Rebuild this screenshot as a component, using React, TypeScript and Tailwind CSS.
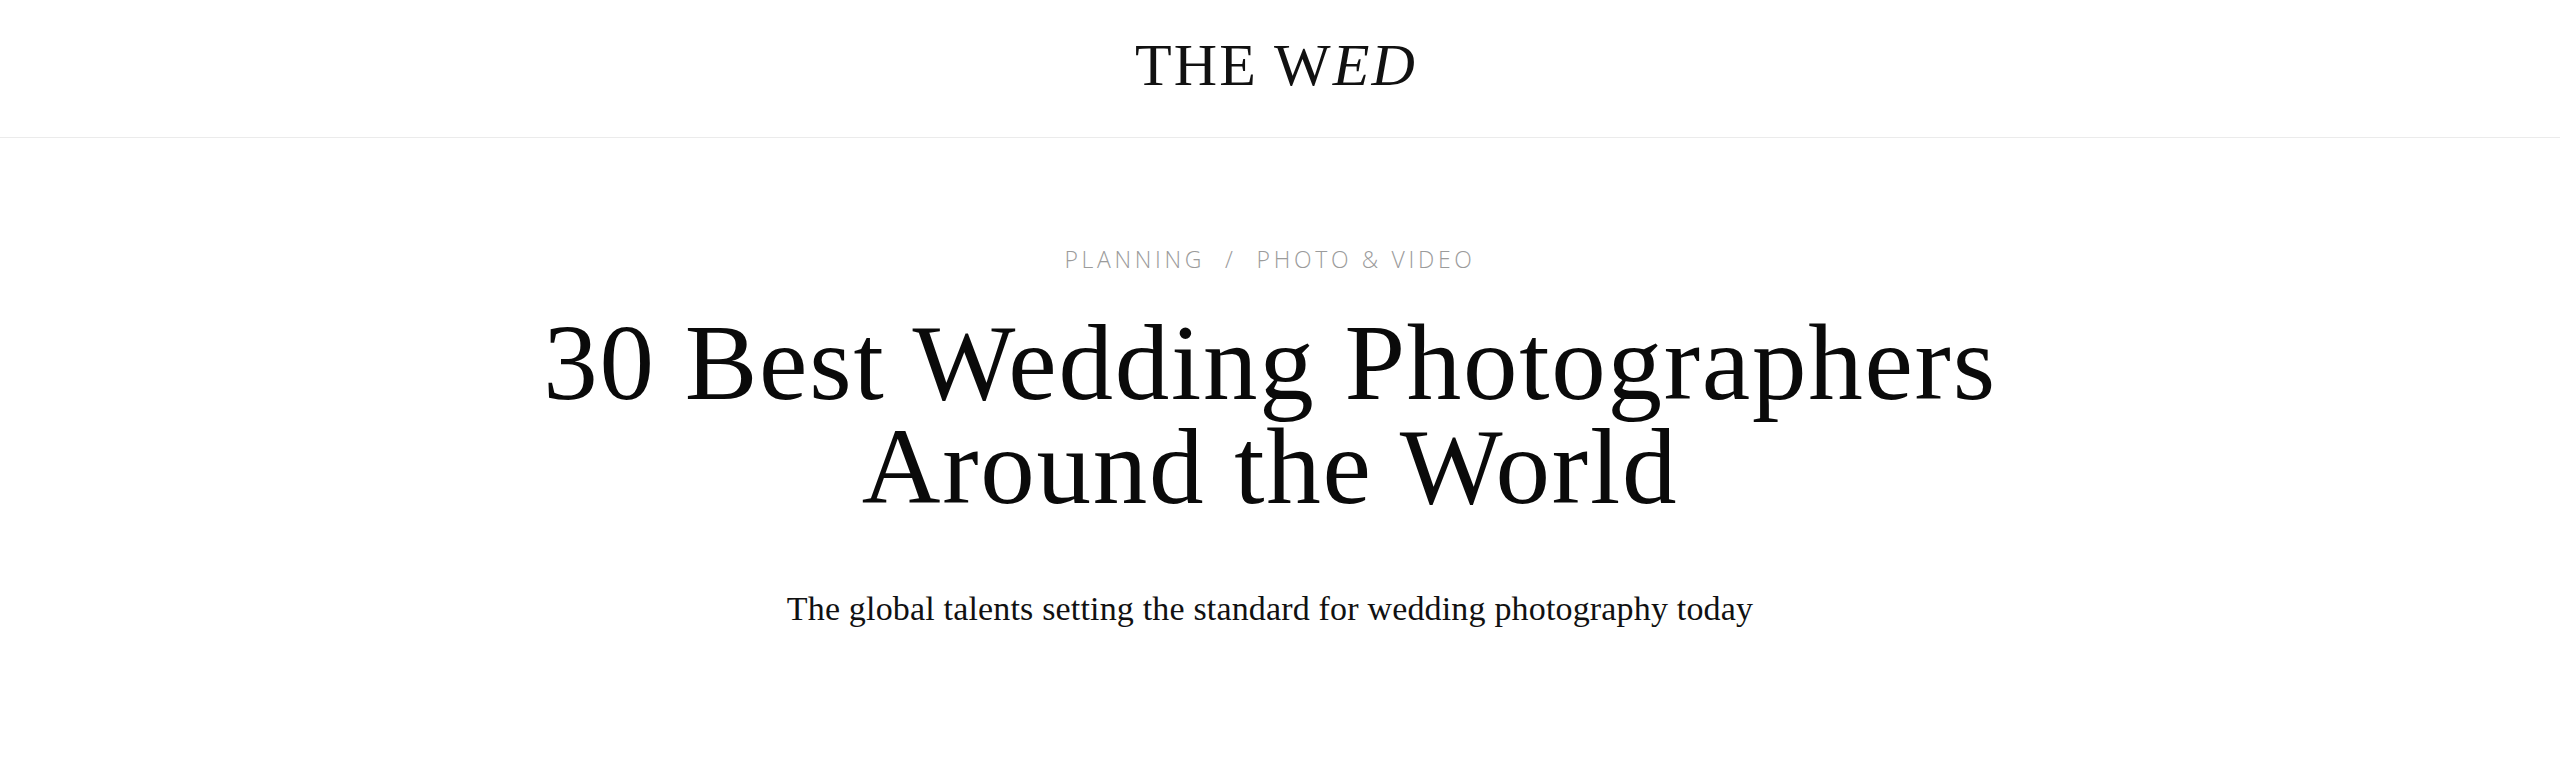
export default function App() {
  return (
    <div className="min-h-screen bg-white text-black">
      <header className="h-[138px] flex items-center justify-center border-b border-[#ebebeb] pr-[8px]">
        <a href="#" className="font-['Liberation_Serif',serif] text-[60px] leading-none tracking-[0.035em] text-[#111] pb-2">
          THE W<span className="italic">ED</span>
        </a>
      </header>

      <main className="flex flex-col items-center text-center pt-[104px] pr-[20px]">
        <div className="font-['Open_Sans',sans-serif] font-light text-[23px] tracking-[0.16em] text-[#9b9b9b] uppercase flex items-center gap-[20px]">
          <a href="#">Planning</a>
          <span>/</span>
          <a href="#">Photo &amp; Video</a>
        </div>

        <h1 className="mt-[34px] font-['Liberation_Serif',serif] text-[109px] leading-[104px] tracking-[0.016em] text-[#0a0a0a] max-w-[1600px]">
          30 Best Wedding Photographers
          <br />
          Around the World
        </h1>

        <p className="mt-[64px] font-['Liberation_Serif',serif] text-[34px] tracking-[0.005em] text-[#111]">
          The global talents setting the standard for wedding photography today
        </p>
      </main>
    </div>
  );
}
